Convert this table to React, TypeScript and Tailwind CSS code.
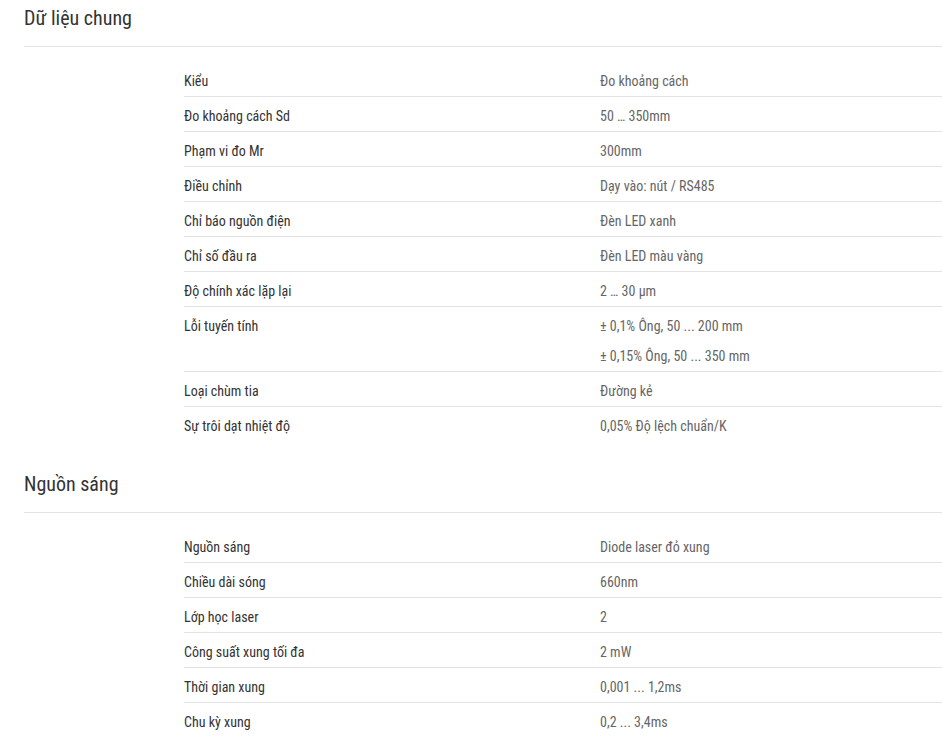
import React from "react";

type Row = { label: string; values: string[] };

const general: Row[] = [
  { label: "Kiểu", values: ["Đo khoảng cách"] },
  { label: "Đo khoảng cách Sd", values: ["50 … 350mm"] },
  { label: "Phạm vi đo Mr", values: ["300mm"] },
  { label: "Điều chỉnh", values: ["Dạy vào: nút / RS485"] },
  { label: "Chỉ báo nguồn điện", values: ["Đèn LED xanh"] },
  { label: "Chỉ số đầu ra", values: ["Đèn LED màu vàng"] },
  { label: "Độ chính xác lặp lại", values: ["2 … 30 µm"] },
  { label: "Lỗi tuyến tính", values: ["± 0,1% Ông, 50 ... 200 mm", "± 0,15% Ông, 50 ... 350 mm"] },
  { label: "Loại chùm tia", values: ["Đường kẻ"] },
  { label: "Sự trôi dạt nhiệt độ", values: ["0,05% Độ lệch chuẩn/K"] },
];

const light: Row[] = [
  { label: "Nguồn sáng", values: ["Diode laser đỏ xung"] },
  { label: "Chiều dài sóng", values: ["660nm"] },
  { label: "Lớp học laser", values: ["2"] },
  { label: "Công suất xung tối đa", values: ["2 mW"] },
  { label: "Thời gian xung", values: ["0,001 ... 1,2ms"] },
  { label: "Chu kỳ xung", values: ["0,2 ... 3,4ms"] },
];

function Section({ title, rows }: { title: string; rows: Row[] }) {
  return (
    <section>
      <h2 className="ml-6 h-[47px] border-b border-[#e3e3e3] pt-[4px] text-[20px] leading-[28px] text-[#333]">
        {title}
      </h2>
      <div className="ml-[184px] mt-[15px]">
        {rows.map((r, i) => (
          <div
            key={i}
            className={`grid grid-cols-[416px_1fr] ${i < rows.length - 1 ? "border-b border-[#e3e3e3]" : ""}`}
          >
            <div className="pt-[9px] text-[14px] leading-[20px] text-[#333]">{r.label}</div>
            <div className="flex flex-col gap-[10px] pt-[9px] pb-[5px] text-[14px] leading-[20px] text-[#666]">
              {r.values.map((v, j) => (
                <div key={j}>{v}</div>
              ))}
            </div>
          </div>
        ))}
      </div>
    </section>
  );
}

export default function App() {
  return (
    <div
      className="min-h-[753px] w-[942px] bg-white [font-stretch:condensed]"
      style={{ fontFamily: "'Roboto Condensed', Roboto, 'Noto Sans', sans-serif" }}
    >
      <Section title="Dữ liệu chung" rows={general} />
      <div className="h-[25px]" />
      <Section title="Nguồn sáng" rows={light} />
    </div>
  );
}
